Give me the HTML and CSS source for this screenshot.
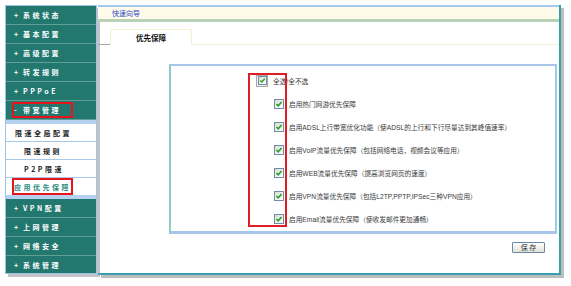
FILE: index.html
```html
<html>
	<head>
		<meta charset="utf-8">
		<link rel="stylesheet" href="styles.css">
	</head>
	<body>
		<div class="frame">
			<div class="menu">
				<div class="menu-item"><span class="sign">+</span>系统状态</div>
				<div class="menu-item"><span class="sign">+</span>基本配置</div>
				<div class="menu-item"><span class="sign">+</span>高级配置</div>
				<div class="menu-item"><span class="sign">+</span>转发规则</div>
				<div class="menu-item"><span class="sign">+</span>PPPoE</div>
				<div class="menu-item"><span class="mark"><span class="sign">-</span>带宽管理</span></div>
				<div class="submenu">
					<div class="sub-item">限速全局配置</div>
					<div class="sub-item indent">限速规则</div>
					<div class="sub-item indent">P2P限速</div>
					<div class="sub-item current"><span class="mark">应用优先保障</span></div>
				</div>
				<div class="menu-item"><span class="sign">+</span>VPN配置</div>
				<div class="menu-item"><span class="sign">+</span>上网管理</div>
				<div class="menu-item"><span class="sign">+</span>网络安全</div>
				<div class="menu-item last"><span class="sign">+</span>系统管理</div>
			</div>
			<div class="main">
				<div class="crumb">快速向导</div>
				<div class="tabs">
					<div class="tab-gap"></div>
					<div class="tab">优先保障</div>
					<div class="tab-rest"></div>
				</div>
				<div class="panel">
					<div class="checks">
						<label class="row check-all">
							<span class="cb-frame"><span class="cb"><svg viewBox="0 0 8 8"><path d="M1.5 4 L3.2 5.8 L6.6 2" /></svg></span></span>
							全选/全不选
						</label>
						<label class="row check-item">
							<span class="cb"><svg viewBox="0 0 8 8"><path d="M1.5 4 L3.2 5.8 L6.6 2" /></svg></span>
							启用热门网游优先保障
						</label>
						<label class="row check-item">
							<span class="cb"><svg viewBox="0 0 8 8"><path d="M1.5 4 L3.2 5.8 L6.6 2" /></svg></span>
							启用ADSL上行带宽优化功能（使ADSL的上行和下行尽量达到其峰值速率）
						</label>
						<label class="row check-item">
							<span class="cb"><svg viewBox="0 0 8 8"><path d="M1.5 4 L3.2 5.8 L6.6 2" /></svg></span>
							启用VoIP流量优先保障（包括网络电话，视频会议等应用）
						</label>
						<label class="row check-item">
							<span class="cb"><svg viewBox="0 0 8 8"><path d="M1.5 4 L3.2 5.8 L6.6 2" /></svg></span>
							启用WEB流量优先保障（提高浏览网页的速度）
						</label>
						<label class="row check-item">
							<span class="cb"><svg viewBox="0 0 8 8"><path d="M1.5 4 L3.2 5.8 L6.6 2" /></svg></span>
							启用VPN流量优先保障（包括L2TP,PPTP,IPSec三种VPN应用）
						</label>
						<label class="row check-item">
							<span class="cb"><svg viewBox="0 0 8 8"><path d="M1.5 4 L3.2 5.8 L6.6 2" /></svg></span>
							启用Email流量优先保障（使收发邮件更加通畅）
						</label>
						<div class="annot"></div>
					</div>
				</div>
				<div class="actions">
					<button class="btn">保 存</button>
				</div>
			</div>
		</div>
	</body>
</html>
```

FILE: styles.css
```css
body{
	margin:0;
	background-color:#ffffff;
	font-family:"Liberation Sans", "Noto Sans CJK SC", sans-serif;
}
.frame{
	display:flex;
	align-items:flex-start;
	gap:1px;
	padding:5px 0 0 5px;
}

/* left menu */
.menu{
	width:92px;
	box-sizing:border-box;
	border:1px solid #9ec4ea;
	box-shadow:3px 3px 0 #c4c4c4;
}
.menu-item{
	display:flex;
	align-items:center;
	height:18px;
	padding-left:8px;
	background-color:#22786f;
	border-bottom:1px solid #5f9f95;
	color:#ffffff;
	font-family:"Noto Sans CJK SC", sans-serif;
	font-weight:bold;
	font-size:7px;
	letter-spacing:2.5px;
	white-space:nowrap;
}
.menu-item.last{
	border-bottom:none;
	height:17px;
}
.sign{
	display:inline-block;
	width:9px;
}
.mark{
	display:flex;
	align-items:center;
	width:57px;
	height:12px;
	outline:2px solid #e8141c;
}
.submenu{
	background-color:#ffffff;
	border-top:4px solid #b4d2ee;
	border-bottom:4px solid #b4d2ee;
}
.sub-item{
	display:flex;
	align-items:center;
	height:17px;
	padding-left:9px;
	border-bottom:1px solid #a8c8e8;
	color:#1c1c1c;
	font-family:"Noto Sans CJK SC", sans-serif;
	font-weight:bold;
	font-size:7px;
	letter-spacing:2.5px;
	white-space:nowrap;
}
.sub-item.indent{
	padding-left:18px;
}
.sub-item.current{
	border-bottom:none;
	padding-left:8px;
	color:#2a8a80;
}
.sub-item.current .mark{
	height:13px;
}

/* main area */
.main{
	width:463px;
	height:270px;
	box-sizing:border-box;
	border-right:2px solid #36a0b0;
	border-bottom:2px solid #36a0b0;
	box-shadow:3px 3px 0 #bdbdbd;
}
.crumb{
	height:12px;
	line-height:12px;
	padding-left:14px;
	background-color:#fffaea;
	border-top:2px solid #a4c8ee;
	border-bottom:3px solid #b8d2b8;
	color:#2a4cc8;
	font-family:"Noto Sans CJK SC", sans-serif;
	font-size:7px;
}
.tabs{
	display:flex;
	align-items:flex-end;
	margin-top:7px;
}
.tab-gap{
	width:12px;
	border-bottom:1px solid #aaaaaa;
}
.tab{
	width:80px;
	height:15px;
	line-height:15px;
	border:1px solid #f7f0d6;
	border-bottom:none;
	text-align:center;
	font-family:"Noto Sans CJK SC", sans-serif;
	font-weight:bold;
	font-size:7.5px;
	color:#111111;
}
.tab-rest{
	flex:1;
	border-bottom:1px solid #f5eed6;
}
.panel{
	width:388px;
	box-sizing:border-box;
	margin:19px 0 0 71px;
	padding-bottom:1px;
	border-top:2px solid #a6c6ea;
	border-left:2px solid #8ecaca;
	border-right:2px solid #a6c6ea;
	border-bottom:3px solid #a6c6ea;
}
.checks{
	position:relative;
	margin:3px 0 0 85px;
}
.row{
	display:flex;
	align-items:center;
	gap:5px;
	height:23px;
	color:#3a3a3a;
	font-size:6.7px;
	white-space:nowrap;
}
.check-item{
	margin-left:18px;
}
.cb-frame{
	display:flex;
	align-items:center;
	justify-content:center;
	width:12px;
	height:12px;
	box-sizing:border-box;
	border:1px solid #a8a8a8;
	background-color:#eeeeee;
}
.cb{
	display:block;
	width:10px;
	height:10px;
	box-sizing:border-box;
	border:1px solid #6f8ca8;
	background:linear-gradient(135deg, #dcdcd4, #ffffff);
}
.cb-frame .cb{
	width:9px;
	height:9px;
}
.cb svg{
	display:block;
	width:100%;
	height:100%;
}
.cb path{
	fill:none;
	stroke:#21a121;
	stroke-width:1.6;
}
.annot{
	position:absolute;
	left:-8px;
	top:4px;
	width:39px;
	height:154px;
	box-sizing:border-box;
	border:2px solid #e01c24;
	pointer-events:none;
}
.actions{
	display:flex;
	justify-content:flex-end;
	margin-top:8px;
	padding-right:14px;
}
.btn{
	width:33px;
	height:11px;
	padding:0;
	border:1px solid #6a86a8;
	border-radius:1px;
	background:linear-gradient(#ffffff, #e2e2da);
	color:#333333;
	font-family:"Noto Sans CJK SC", sans-serif;
	font-size:7px;
	line-height:9px;
}
```
